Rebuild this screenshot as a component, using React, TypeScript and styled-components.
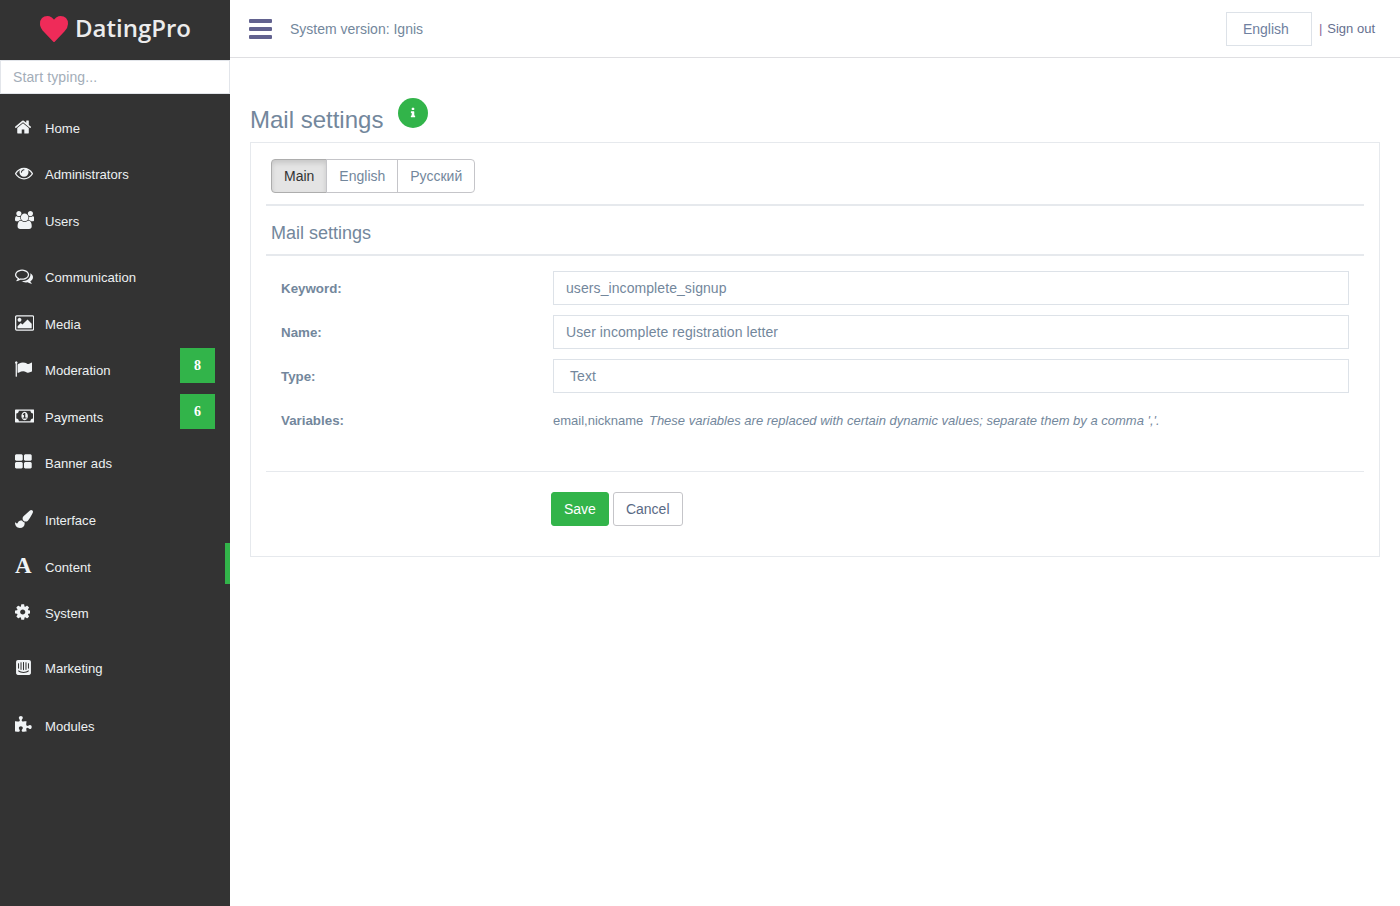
import React from "react";
import styled, { createGlobalStyle } from "styled-components";
import { FaIntercom } from "react-icons/fa";

const Global = createGlobalStyle`
  html, body { margin: 0; padding: 0; background: #fff; }
  body { font-family: "Liberation Sans", Arial, sans-serif; font-size: 14px; color: #73879c; }
  * { box-sizing: border-box; }
`;

const PATHS = {
  home: "M1472 992v480q0 26-19 45t-45 19h-384v-384h-256v384h-384q-26 0-45-19t-19-45v-480q0-1 .5-3t.5-3l575-474 575 474q1 2 1 6zm223-69l-62 74q-8 9-21 11h-3q-13 0-21-7l-692-577-692 577q-12 8-24 7-13-2-21-11l-62-74q-8-10-7-23.5t11-21.5l719-599q32-26 76-26t76 26l244 204v-195q0-14 9-23t23-9h192q14 0 23 9t9 23v408l219 182q10 8 11 21.5t-7 23.5z",
  eye: "M1664 960q-152-236-381-353 61 104 61 225 0 185-131.5 316.5t-316.5 131.5-316.5-131.5-131.5-316.5q0-121 61-225-229 117-381 353 133 205 333.5 326.5t434.5 121.5 434.5-121.5 333.5-326.5zm-720-384q0-20-14-34t-34-14q-125 0-214.5 89.5t-89.5 214.5q0 20 14 34t34 14 34-14 14-34q0-86 61-147t147-61q20 0 34-14t14-34zm848 384q0 34-20 69-140 230-376.5 368.5t-499.5 138.5-499.5-139-376.5-368q-20-35-20-69t20-69q140-229 376.5-368t499.5-139 499.5 139 376.5 368q20 35 20 69z",
  users: "M529 896q-162 5-265 128h-134q-82 0-138-40.5t-56-118.5q0-353 124-353 6 0 43.5 21t97.5 42.5 119 21.5q67 0 133-23-5 37-5 66 0 139 81 256zm1071 637q0 120-73 189.5t-194 69.5h-874q-121 0-194-69.5t-73-189.5q0-53 3.5-103.5t14-109 26.5-108.5 43-97.5 62-81 85.5-53.5 111.5-20q10 0 43 21.5t73 48 107 48 135 21.5 135-21.5 107-48 73-48 43-21.5q61 0 111.5 20t85.5 53.5 62 81 43 97.5 26.5 108.5 14 109 3.5 103.5zm-1024-1277q0 106-75 181t-181 75-181-75-75-181 75-181 181-75 181 75 75 181zm704 384q0 159-112.5 271.5t-271.5 112.5-271.5-112.5-112.5-271.5 112.5-271.5 271.5-112.5 271.5 112.5 112.5 271.5zm576 225q0 78-56 118.5t-138 40.5h-134q-103-123-265-128 81-117 81-256 0-29-5-66 66 23 133 23 59 0 119-21.5t97.5-42.5 43.5-21q124 0 124 353zm-128-609q0 106-75 181t-181 75-181-75-75-181 75-181 181-75 181 75 75 181z",
  comments: "M704 384q-153 0-286 52t-211.5 141-78.5 191q0 82 53 158t149 132l97 56-35 84q34-20 62-39l44-31 53 10q78 14 153 14 153 0 286-52t211.5-141 78.5-191-78.5-191-211.5-141-286-52zm0-128q191 0 353.5 68.5t256.5 186.5 94 257-94 257-256.5 186.5-353.5 68.5q-86 0-176-16-124 88-278 128-36 9-86 16h-3q-11 0-20.5-8t-11.5-21q-1-3-1-6.5t.5-6.5 2-6l2.5-5 3.5-5.5 4-5 4.5-5 4-4.5q5-6 23-25t26-29.5 22.5-29 25-38.5 20.5-44q-124-72-195-177t-71-224q0-139 94-257t256.5-186.5 353.5-68.5zm822 1169q10 24 20.5 44t25 38.5 22.5 29 26 29.5 23 25q1 1 4 4.5t4.5 5 4 5 3.5 5.5l2.5 5 2 6 .5 6.5-1 6.5q-3 14-13 22t-22 7q-50-7-86-16-154-40-278-128-90 16-176 16-271 0-472-132 58 4 88 4 161 0 309-45t264-129q125-92 192-212t67-254q0-77-23-152 129 71 204 178t75 230q0 120-71 224.5t-195 176.5z",
  picture: "M576 576q0 80-56 136t-136 56-136-56-56-136 56-136 136-56 136 56 56 136zm1024 384v448h-1408v-192l320-320 160 160 512-512zm96-704h-1600q-13 0-22.5 9.5t-9.5 22.5v1216q0 13 9.5 22.5t22.5 9.5h1600q13 0 22.5-9.5t9.5-22.5v-1216q0-13-9.5-22.5t-22.5-9.5zm160 32v1216q0 66-47 113t-113 47h-1600q-66 0-113-47t-47-113v-1216q0-66 47-113t113-47h1600q66 0 113 47t47 113z",
  flag: "M320 256q0 72-64 110v1266q0 13-9.5 22.5t-22.5 9.5h-64q-13 0-22.5-9.5t-9.5-22.5v-1266q-64-38-64-110 0-53 37.5-90.5t90.5-37.5 90.5 37.5 37.5 90.5zm1472 64v763q0 25-12.5 38.5t-39.5 27.5q-215 116-369 116-61 0-123.5-22t-108.5-48-115.5-48-142.5-22q-192 0-464 146-17 9-33 9-26 0-45-19t-19-45v-742q0-32 31-55 21-14 79-43 236-120 421-120 107 0 200 29t219 88q38 19 88 19 54 0 117.5-21t110-47 88-47 54.5-21q26 0 45 19t19 45z",
  money: "M768 1152h384v-96h-128v-448h-114l-148 137 77 80q42-37 55-57h2v288h-128v96zm512-256q0 70-21 142t-59.5 134-101.5 101-138 39-138-39-101.5-101-59.5-134-21-142 21-142 59.5-134 101.5-101 138-39 138 39 101.5 101 59.5 134 21 142zm512 256v-512q-106 0-181-75t-75-181h-1152q0 106-75 181t-181 75v512q106 0 181 75t75 181h1152q0-106 75-181t181-75zm128-832v1152q0 26-19 45t-45 19h-1792q-26 0-45-19t-19-45v-1152q0-26 19-45t45-19h1792q26 0 45 19t19 45z",
  th: "M832 1024v384q0 52-38 90t-90 38h-512q-52 0-90-38t-38-90v-384q0-52 38-90t90-38h512q52 0 90 38t38 90zm0-768v384q0 52-38 90t-90 38h-512q-52 0-90-38t-38-90v-384q0-52 38-90t90-38h512q52 0 90 38t38 90zm896 768v384q0 52-38 90t-90 38h-512q-52 0-90-38t-38-90v-384q0-52 38-90t90-38h512q52 0 90 38t38 90zm0-768v384q0 52-38 90t-90 38h-512q-52 0-90-38t-38-90v-384q0-52 38-90t90-38h512q52 0 90 38t38 90z",
  brush: "M1615 0q70 0 122.5 46.5t52.5 116.5q0 63-45 151-332 629-465 752-97 91-218 91-126 0-216.5-92.5t-90.5-219.5q0-128 92-212l638-579q59-54 130-54zm-909 1034q39 76 106.5 130t150.5 76l1 71q4 213-129.5 347t-348.5 134q-123 0-218-46.5t-152.5-127.5-86.5-183-29-220q7 5 41 30t62 44.5 59 36.5 46 17q41 0 55-37 25-66 57.5-112.5t69.5-76 88-47.5 103-25.5 125-10.5z",
  cog: "M1152 896q0-106-75-181t-181-75-181 75-75 181 75 181 181 75 181-75 75-181zm512-109v222q0 12-8 23t-20 13l-185 28q-19 54-39 91 35 50 107 138 10 12 10 25t-9 23q-27 37-99 108t-94 71q-12 0-26-9l-138-108q-44 23-91 38-16 136-29 186-7 28-36 28h-222q-14 0-24.5-8.5t-11.5-21.5l-28-184q-49-16-90-37l-141 107q-10 9-25 9-14 0-25-11-126-114-165-168-7-10-7-23 0-12 8-23 15-21 51-66.5t54-70.5q-27-50-41-99l-183-27q-13-2-21-12.5t-8-23.5v-222q0-12 8-23t19-13l186-28q14-46 39-92-40-57-107-138-10-12-10-24 0-10 9-23 26-36 98.5-107.5t94.5-71.5q13 0 26 10l138 107q44-23 91-38 16-136 29-186 7-28 36-28h222q14 0 24.5 8.5t11.5 21.5l28 184q49 16 90 37l142-107q9-9 24-9 13 0 25 10 129 119 165 170 7 8 7 22 0 12-8 23-15 21-51 66.5t-54 70.5q26 50 41 98l183 28q13 2 21 12.5t8 23.5z",
  puzzle: "M1664 1098q0 81-44.5 135t-123.5 54q-41 0-77.5-17.5t-59-38-56.5-38-71-17.5q-110 0-110 124 0 39 16 115t15 115v5q-22 0-33 1-34 3-97.5 11.5t-115.5 13.5-98 5q-61 0-103-26.5t-42-83.5q0-37 17.5-71t38-56.5 38-59 17.5-77.5q0-79-54-123.5t-135-44.5q-84 0-143 45.5t-59 127.5q0 43 15 83t33.5 64.5 33.5 53 15 50.5q0 45-46 89-37 35-117 35-95 0-245-24-9-2-27.5-4t-27.5-4l-13-2q-1 0-3-1-2 0-2-1v-1024q2 1 17.5 3.5t34 5 21.5 3.5q150 24 245 24 80 0 117-35 46-44 46-89 0-22-15-50.5t-33.5-53-33.5-64.5-15-83q0-82 59-127.5t144-45.5q80 0 134 44.5t54 123.5q0 41-17.5 77.5t-38 59-38 56.5-17.5 71q0 57 42 83.5t103 26.5q64 0 180-15t163-17v2q-1 2-3.5 17.5t-5 34-3.5 21.5q-24 150-24 245 0 80 35 117 44 46 89 46 22 0 50.5-15t53-33.5 64.5-33.5 83-15q82 0 127.5 59t45.5 143z",
  heart: "M896 1664q-26 0-44-18l-624-602q-10-8-27.5-26t-55.5-65.5-68-97.5-53.5-121-23.5-138q0-220 127-344t351-124q62 0 126.5 21.5t120 58 95.5 68.5 76 68q36-36 76-68t95.5-68.5 120-58 126.5-21.5q224 0 351 124t127 344q0 221-229 450l-623 601q-18 18-44 18z",
  info: "M1216 1344v128q0 26-19 45t-45 19h-512q-26 0-45-19t-19-45v-128q0-26 19-45t45-19h64v-384h-64q-26 0-45-19t-19-45v-128q0-26 19-45t45-19h384q26 0 45 19t19 45v576h64q26 0 45 19t19 45zm-128-1152v192q0 26-19 45t-45 19h-256q-26 0-45-19t-19-45v-192q0-26 19-45t45-19h256q26 0 45 19t19 45z",
};

// FontAwesome 4 glyphs: x is the left edge in font units, w the advance; 18px = 1792 units.
const Fa = ({ name, x = 0, w = 1792 }: { name: keyof typeof PATHS; x?: number; w?: number }) => (
  <svg width={(w * 18) / 1792} height={18} viewBox={`${x} 0 ${w} 1792`} fill="currentColor">
    <path d={PATHS[name]} />
  </svg>
);

const Page = styled.div`
  display: flex;
  min-height: 906px;
`;
const Sidebar = styled.aside`
  width: 230px;
  flex: none;
  background: #333;
  color: #ecf0f1;
`;
const Brand = styled.div`
  height: 60px;
  display: flex;
  align-items: center;
  padding-left: 40px;
  gap: 7px;
  color: #ef2b59;
`;
const HeartIcon = styled.svg`
  width: 28px;
  height: 26px;
  fill: currentColor;
  position: relative;
  top: -1px;
`;
const BrandName = styled.span`
  font-family: "Open Sans", sans-serif;
  font-weight: 600;
  font-size: 24px;
  color: #ececec;
  position: relative;
  top: -3px;
`;
const Search = styled.input`
  display: block;
  width: 230px;
  height: 34px;
  border: 1px solid #e2e5ea;
  padding: 0 12px;
  font: 14px "Liberation Sans", sans-serif;
  letter-spacing: 0.12px;
  outline: none;
  background: #fff;
  &::placeholder { color: #a3adb8; opacity: 1; }
`;
const Nav = styled.nav`
  padding-top: 11px;
`;
const Group = styled.div<{ $gap?: number }>`
  margin-top: ${(p) => p.$gap ?? 0}px;
`;
const Item = styled.a<{ $active?: boolean }>`
  position: relative;
  display: flex;
  align-items: center;
  height: 46.5px;
  padding-left: 15px;
  color: #ecf0f1;
  font-size: 13.1px;
  ${(p) => p.$active && `&::after { content: ""; position: absolute; right: 0; top: -0.5px; width: 5px; height: 41px; background: #32b44a; }`}
`;
const IconSlot = styled.span`
  width: 30px;
  flex: none;
  display: flex;
  align-items: center;
  position: relative;
  top: -1.5px;
  color: #f1f4f6;
`;
const FontGlyph = styled.span`
  font: bold 23px/18px "Liberation Serif", serif;
  color: #f1f4f6;
`;
const Badge = styled.span`
  position: absolute;
  right: 15px;
  top: 0.5px;
  width: 35px;
  height: 35px;
  background: #32b44a;
  color: #fff;
  font: bold 14px/36px "Liberation Serif", serif;
  text-align: center;
`;
const Main = styled.main`
  flex: 1;
  min-width: 0;
`;
const Topbar = styled.header`
  height: 58px;
  border-bottom: 1px solid #dfdfe2;
  display: flex;
  align-items: center;
  padding: 0 25px 0 19px;
`;
const Burger = styled.span`
  display: flex;
  width: 23px;
  flex-direction: column;
  gap: 4px;
  margin-right: 18px;
  & > i { display: block; height: 4px; border-radius: 1px; background: #62628f; }
`;
const Version = styled.span`
  flex: 1;
  color: #73879c;
`;
const LangBox = styled.span`
  width: 86px;
  height: 34px;
  border: 1px solid #dde2e8;
  display: flex;
  align-items: center;
  padding-left: 16px;
  margin-right: 7px;
  color: #6f80a0;
`;
const SignOut = styled.span`
  color: #66708f;
  font-size: 13px;
  & > b { font-weight: 400; color: #8a6a9a; margin-right: 5px; }
`;
const Content = styled.div`
  padding: 0 20px;
`;
const TitleRow = styled.div`
  height: 84px;
  position: relative;
`;
const Title = styled.h1`
  margin: 0;
  padding-top: 48px;
  font-weight: 400;
  font-size: 24px;
  line-height: 28px;
  color: #73879c;
`;
const InfoBadge = styled.span`
  position: absolute;
  left: 148px;
  top: 40px;
  width: 30px;
  height: 30px;
  border-radius: 50%;
  background: #32b44a;
  color: #fff;
  display: flex;
  align-items: center;
  justify-content: center;
  & > svg { width: 12px; height: 12px; fill: currentColor; }
`;
const Card = styled.section`
  border: 1px solid #e6e9ed;
  height: 415px;
  padding: 16px 15px 0;
`;
const Tabs = styled.div`
  display: inline-flex;
  margin-left: 5px;
  height: 34px;
  vertical-align: top;
`;
const Tab = styled.span<{ $active?: boolean }>`
  padding: 0 12px;
  display: flex;
  align-items: center;
  border: 1px solid #c5c5c9;
  margin-left: -1px;
  color: #73879c;
  &:first-child { margin-left: 0; border-radius: 4px 0 0 4px; }
  &:last-child { border-radius: 0 4px 4px 0; }
  ${(p) => p.$active && `background: #e4e4e4; color: #333; box-shadow: inset 0 3px 5px rgba(0,0,0,.125); border-color: #adadad;`}
`;
const ThickRule = styled.div`
  height: 2px;
  background: #e6e9ed;
`;
const TabsBar = styled.div`
  height: 45px;
`;
const Subtitle = styled.h2`
  margin: 0;
  height: 48px;
  padding-left: 5px;
  font-weight: 400;
  font-size: 18px;
  line-height: 54px;
  color: #73879c;
`;
const Form = styled.div`
  padding: 15px 15px 0;
  display: grid;
  grid-template-columns: 272px 796px;
  row-gap: 10px;
  align-items: center;
`;
const Label = styled.label`
  font-weight: 700;
  font-size: 13.33px;
`;
const Field = styled.div<{ $pad?: number }>`
  height: 34px;
  border: 1px solid #dde2e8;
  display: flex;
  align-items: center;
  padding-left: ${(p) => p.$pad ?? 12}px;
  color: #73879c;
  letter-spacing: 0.08px;
`;
const Vars = styled.div`
  height: 34px;
  display: flex;
  align-items: center;
  font-size: 13px;
  white-space: pre;
`;
const Hint = styled.em`
  font-style: italic;
  margin-left: 2px;
`;
const Rule = styled.div`
  height: 1px;
  background: #e6e9ed;
  margin-top: 34px;
`;
const Actions = styled.div`
  display: flex;
  gap: 4px;
  padding: 20px 0 0 285px;
`;
const Button = styled.button<{ $primary?: boolean }>`
  height: 34px;
  padding: 0 12px;
  border-radius: 3px;
  border: 1px solid ${(p) => (p.$primary ? "#32b44a" : "#c5c5c9")};
  background: ${(p) => (p.$primary ? "#32b44a" : "#fff")};
  color: ${(p) => (p.$primary ? "#fff" : "#5a6a85")};
  font: 14px "Liberation Sans", sans-serif;
`;

const items: { i: React.ReactNode; t: string; b?: string; a?: boolean }[][] = [
  [
    { i: <Fa name="home" x={97} w={1600} />, t: "Home" },
    { i: <Fa name="eye" />, t: "Administrators" },
    { i: <Fa name="users" x={-64} w={1920} />, t: "Users" },
  ],
  [
    { i: <Fa name="comments" />, t: "Communication" },
    { i: <Fa name="picture" x={-64} w={1920} />, t: "Media" },
    { i: <Fa name="flag" x={64} w={1728} />, t: "Moderation", b: "8" },
    { i: <Fa name="money" w={1920} />, t: "Payments", b: "6" },
    { i: <Fa name="th" x={64} w={1664} />, t: "Banner ads" },
  ],
  [
    { i: <Fa name="brush" />, t: "Interface" },
    { i: <FontGlyph>A</FontGlyph>, t: "Content", a: true },
    { i: <Fa name="cog" x={128} w={1536} />, t: "System" },
  ],
  [{ i: <FaIntercom size={17} />, t: "Marketing" }],
  [{ i: <Fa name="puzzle" w={1664} />, t: "Modules" }],
];
const gaps = [0, 9.8, 10.5, 8.5, 11];

export default function App() {
  return (
    <Page>
      <Global />
      <Sidebar>
        <Brand>
          <HeartIcon viewBox="0 128 1792 1536" preserveAspectRatio="none"><path d={PATHS.heart} /></HeartIcon>
          <BrandName>DatingPro</BrandName>
        </Brand>
        <Search placeholder="Start typing..." />
        <Nav>
          {items.map((g, n) => (
            <Group key={n} $gap={gaps[n]}>
              {g.map((it) => (
                <Item key={it.t} $active={it.a}>
                  <IconSlot>{it.i}</IconSlot>
                  {it.t}
                  {it.b && <Badge>{it.b}</Badge>}
                </Item>
              ))}
            </Group>
          ))}
        </Nav>
      </Sidebar>
      <Main>
        <Topbar>
          <Burger><i /><i /><i /></Burger>
          <Version>System version: Ignis</Version>
          <LangBox>English</LangBox>
          <SignOut><b>|</b>Sign out</SignOut>
        </Topbar>
        <Content>
          <TitleRow>
            <Title>Mail settings</Title>
            <InfoBadge><svg viewBox="0 0 1792 1792"><path d={PATHS.info} /></svg></InfoBadge>
          </TitleRow>
          <Card>
            <TabsBar>
              <Tabs>
                <Tab $active>Main</Tab>
                <Tab>English</Tab>
                <Tab>Русский</Tab>
              </Tabs>
            </TabsBar>
            <ThickRule />
            <Subtitle>Mail settings</Subtitle>
            <ThickRule />
            <Form>
              <Label>Keyword:</Label>
              <Field>users_incomplete_signup</Field>
              <Label>Name:</Label>
              <Field>User incomplete registration letter</Field>
              <Label>Type:</Label>
              <Field $pad={16}>Text</Field>
              <Label>Variables:</Label>
              <Vars>email,nickname <Hint>These variables are replaced with certain dynamic values; separate them by a comma ','.</Hint></Vars>
            </Form>
            <Rule />
            <Actions>
              <Button $primary>Save</Button>
              <Button>Cancel</Button>
            </Actions>
          </Card>
        </Content>
      </Main>
    </Page>
  );
}
